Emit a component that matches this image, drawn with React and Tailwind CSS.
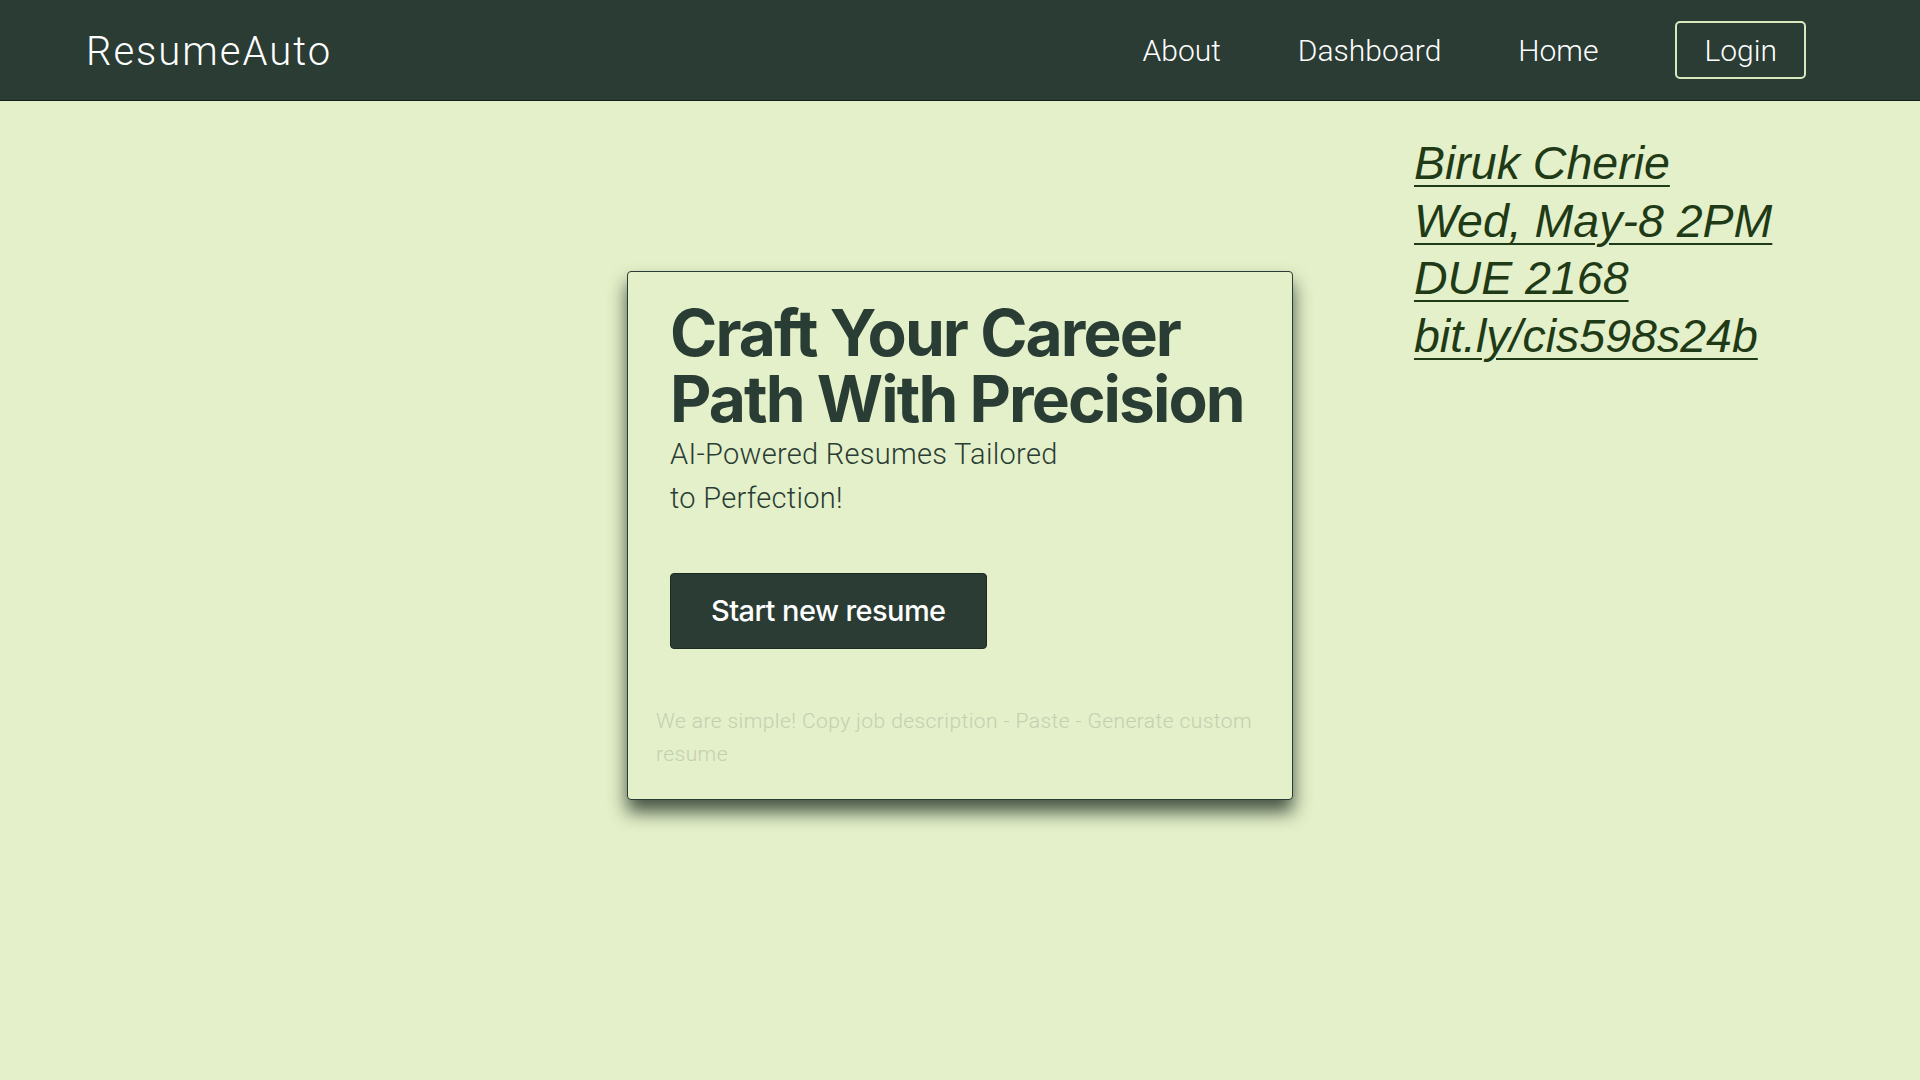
import React from "react";

const light = { fontFamily: "Roboto, Inter, 'Noto Sans', sans-serif" };

export default function App() {
  return (
    <div
      className="relative min-h-[1080px] w-full bg-[#e4f0c9]"
      style={{ fontFamily: "Inter, 'Noto Sans', sans-serif" }}
    >
      <nav className="flex h-[101px] items-center justify-between border-b border-[#151f1a] bg-[#2a3c34] pl-[86px] pr-[114px]">
        <div className="mt-[4px] text-[40px] font-light tracking-[0.05em] text-white" style={light}>
          ResumeAuto
        </div>
        <div className="flex items-center gap-[77px] text-[30px] font-light text-white" style={light}>
          <a>About</a>
          <a>Dashboard</a>
          <a>Home</a>
          <a className="flex h-[58px] items-center rounded-[5px] border-2 border-[#d9e8bd] px-[27px]">
            Login
          </a>
        </div>
      </nav>

      <main className="flex justify-center pt-[170px]">
        <div className="w-[666px] rounded-[4px] border border-[#2a3c34] bg-[#e4f0c9] p-7 shadow-[0_12px_18px_rgba(30,45,35,0.8)]">
          <div className="pl-[14px]">
            <h1 className="text-[64px] font-bold leading-[66px] tracking-[-0.03em] text-[#2a3d35]">
              Craft Your Career
              <br />
              Path With Precision
            </h1>
            <p className="text-[29px] font-light leading-[44px] tracking-[0.01em] text-[#2a3d35]" style={light}>
              AI-Powered Resumes Tailored
              <br />
              to Perfection!
            </p>
            <button className="mt-[53px] flex h-[76px] items-center rounded-[4px] border border-[#1c2a24] bg-[#2a3c34] px-10 text-[29px] font-medium tracking-[-0.02em] text-white">
              Start new resume
            </button>
          </div>
          <p className="mt-[56px] text-[21px] font-light leading-[33px] tracking-[0.02em] text-[#c3cfb0]" style={light}>
            We are simple! Copy job description - Paste - Generate custom resume
          </p>
        </div>
      </main>

      <div
        className="absolute left-[1414px] top-[135px] text-[46.5px] italic leading-[57.5px] text-[#1f3a16] underline decoration-2 underline-offset-[6px]"
        style={{ fontFamily: "'Liberation Sans', Arial, sans-serif" }}
      >
        <div>Biruk Cherie</div>
        <div>Wed, May-8 2PM</div>
        <div>DUE 2168</div>
        <div>bit.ly/cis598s24b</div>
      </div>
    </div>
  );
}
